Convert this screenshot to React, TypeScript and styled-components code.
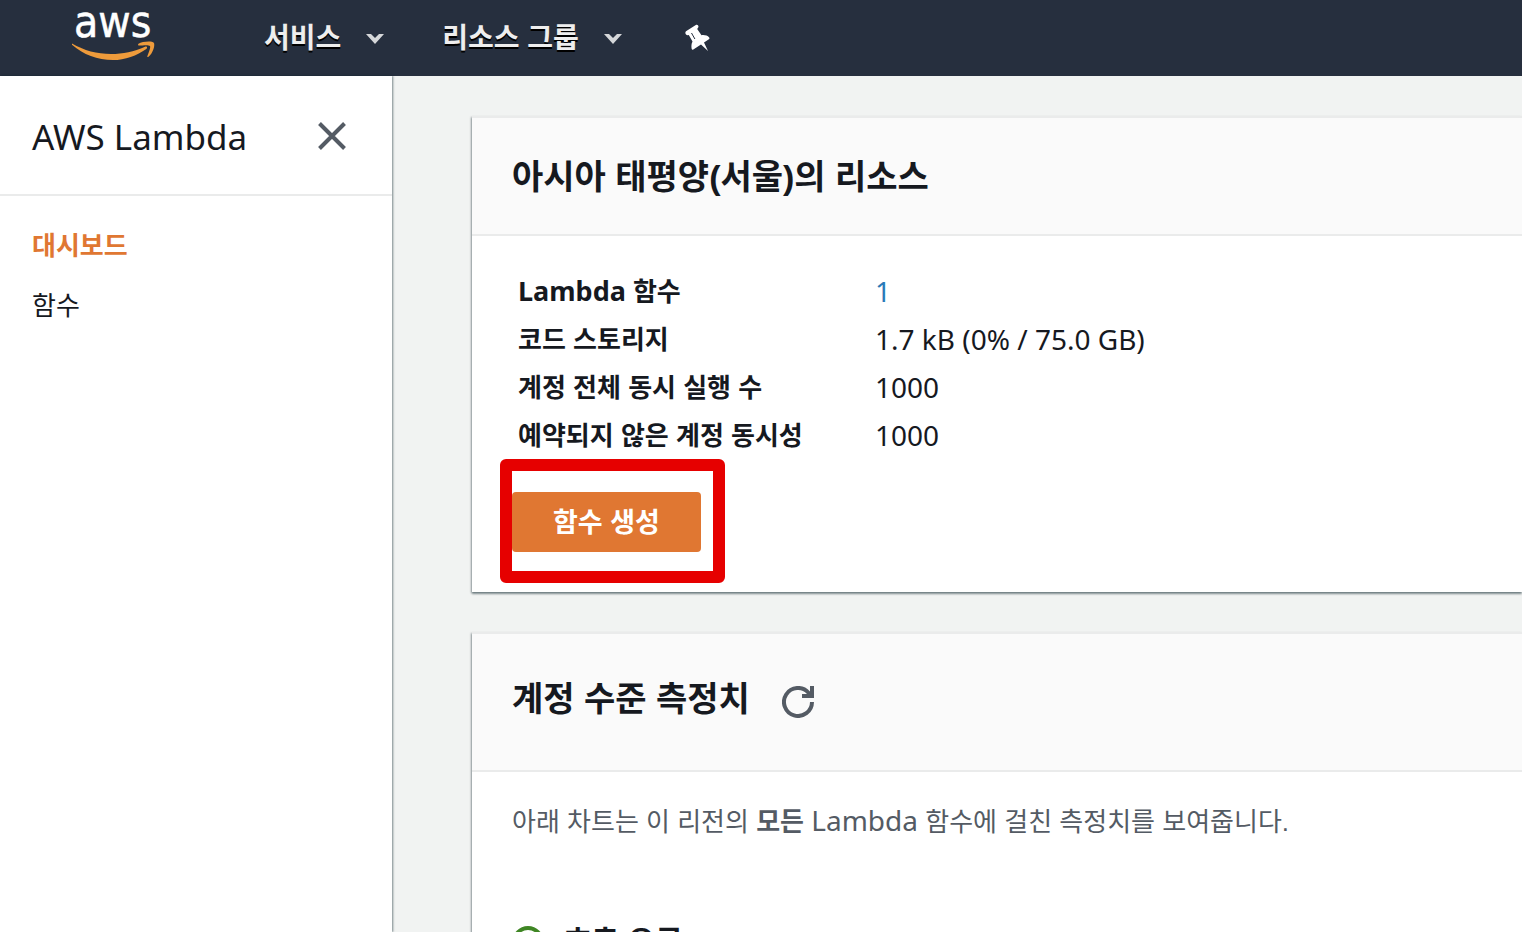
import React from "react";
import styled, { createGlobalStyle } from "styled-components";

const latin = `"Noto Sans", "Noto Sans CJK KR", sans-serif`;
const korean = `"Liberation Sans", "Noto Sans CJK KR", sans-serif`;
const ink = "#16191f";
const slate = "#545b64";
const orange = "#e07732";
const rule = "#eaebeb";

const GlobalStyle = createGlobalStyle`
  *, *::before, *::after { box-sizing: border-box; }
  body { margin: 0; color: ${ink}; background: #f1f3f2; font: 26px/48px ${korean}; }
  h1, h2, h3, p, ul { margin: 0; padding: 0; }
  button { border: 0; background: none; padding: 0; font: inherit; color: inherit; cursor: pointer; }
  a { text-decoration: none; color: inherit; }
  svg { display: block; }
`;

const Shell = styled.div`
  display: flex;
  flex-direction: column;
  height: 100vh;
  overflow: hidden;
`;

const TopBar = styled.header`
  display: flex;
  align-items: center;
  flex: none;
  height: 76px;
  padding-left: 72px;
  background: #262f3e;
  color: #eee;
`;

const Logo = styled.a`
  display: block;
  margin-right: 108px;
`;

const LogoText = styled.text`
  font: 44px "DejaVu Sans Condensed", "DejaVu Sans", sans-serif;
  fill: #fff;
  stroke: #fff;
  stroke-width: 0.5;
`;

const MenuButton = styled.button`
  display: flex;
  align-items: center;
  gap: 25px;
  margin-right: 58px;
  font-size: 28px;
  line-height: 40px;
  font-weight: 700;
  text-shadow: 0 2px 0 #000;
`;

const MenuLabel = styled.span`
  padding-top: 2px;
`;

const PinButton = styled.button`
  margin-left: 5px;
`;

const Body = styled.div`
  display: flex;
  flex: 1;
  min-height: 0;
`;

const Sidebar = styled.aside`
  flex: none;
  width: 392px;
  background: #fff;
  box-shadow: 1px 0 2px rgba(0, 28, 36, 0.5);
`;

const SidebarHeader = styled.div`
  display: flex;
  align-items: center;
  justify-content: space-between;
  height: 120px;
  padding: 2px 46px 0 32px;
  border-bottom: 2px solid ${rule};
`;

const SidebarTitle = styled.h2`
  padding-top: 2px;
  font: 400 35px/48px ${latin};
`;

const NavList = styled.ul`
  display: flex;
  flex-direction: column;
  gap: 12px;
  padding: 26px 32px;
  list-style: none;
`;

const NavLink = styled.a<{ $active?: boolean }>`
  display: block;
  color: ${(p) => (p.$active ? orange : ink)};
  font-weight: ${(p) => (p.$active ? 700 : 400)};
`;

const Main = styled.main`
  display: flex;
  flex: 1;
  flex-direction: column;
  gap: 40px;
  min-width: 0;
  padding: 40px 0 0 80px;
  overflow: hidden;
`;

const Panel = styled.section`
  flex: none;
  background: #fff;
  border-top: 2px solid ${rule};
  box-shadow: 0 2px 2px rgba(0, 28, 36, 0.4), -1px 1px 2px rgba(0, 28, 36, 0.3);
`;

const PanelHeader = styled.div<{ $tall?: boolean }>`
  display: flex;
  align-items: center;
  gap: 32px;
  height: ${(p) => (p.$tall ? 138 : 118)}px;
  padding: 0 40px;
  background: #fafafa;
  border-bottom: 2px solid ${rule};
`;

const PanelTitle = styled.h2<{ $raised?: boolean }>`
  padding: ${(p) => (p.$raised ? "0 0 6px" : "2px 0 0")};
  font-size: 34px;
  line-height: 48px;
  font-weight: 700;
`;

const PanelBody = styled.div<{ $top: number }>`
  padding: ${(p) => p.$top}px 40px 40px;
`;

const Stats = styled.table`
  margin: 0 6px 32px;
  border-collapse: collapse;

  th, td { padding: 0; height: 48px; text-align: left; vertical-align: top; }
  th { width: 357px; font-weight: 700; }
  td { font-family: ${latin}; font-size: 28px; line-height: 46px; }
`;

const Latin = styled.span<{ $size: number }>`
  font-family: ${latin};
  font-size: ${(p) => p.$size}px;
  line-height: 28px;
`;

const CountLink = styled.a`
  color: #2a7ab8;
`;

const CreateArea = styled.div`
  position: relative;
  width: max-content;
`;

const CreateButton = styled.button`
  display: block;
  height: 60px;
  padding: 2px 41px 0;
  border-radius: 4px;
  background: ${orange};
  color: #fff;
  font-size: 27px;
  font-weight: 700;
`;

const Highlight = styled.div`
  position: absolute;
  inset: -33px -24px -31px -12px;
  border: 12px solid #e60000;
  border-radius: 6px;
  pointer-events: none;
`;

const Note = styled.p`
  margin-bottom: 72px;
  color: ${slate};
`;

const MetricTitle = styled.h3`
  display: flex;
  align-items: center;
  gap: 20px;
  font-size: 30px;
  line-height: 48px;
`;

const Caret = () => (
  <svg width="18" height="11" viewBox="0 0 18 11" aria-hidden="true">
    <path d="M0 1h5l4 4 4-4h5L9 11z" fill="#d5d7d9" />
  </svg>
);

const AwsLogo = () => (
  <svg width="84" height="76" viewBox="0 -12 84 76" aria-hidden="true">
    <LogoText x="2" y="25">aws</LogoText>
    <path d="M0 31.500C12 38.500 25 42 39 42c12 0 23-2.400 34-7.300 1.800-.7 3 1 1.300 2.200C65 43.500 53 48 41 48 25.500 48 11 42.500.3 33c-.9-.8-.9-2-.3-1.500z" fill="#ee9b3b" />
    <path d="M66.500 31.700C70 29.400 80 28.600 81.800 30.700c1.600 2.200-.7 10.400-5.300 14.100-.8.6-1.500.2-1.100-.7 1.300-3.200 3.400-8.600 2.600-10-1-1.500-7-.8-10.700-.5-1.200.1-1.600-1.200-.8-1.900z" fill="#ee9b3b" />
  </svg>
);

const PinIcon = () => (
  <svg width="25" height="28" viewBox="0 0 25 28" aria-hidden="true">
    <path d="M1 7.300L11.200.8c1.700-.6 3 1.700 1.800 3L12.200 5l4.300 6.200c3-.4 6 .3 7.700 2.300.5.700.3 1.400-.3 1.800L19 18.500 23 27 16 20.500 8.300 25.600c-.7.4-1.400.2-1.600-.6-.5-2.700-.4-5.400.8-7.500L3.800 11 2.800 11.200C.8 11.300-.5 8.500 1 7.300z" fill="#fff" />
    <path d="M6.500 9l3.400 6" stroke="#262f3e" strokeWidth="1" />
  </svg>
);

const CloseIcon = () => (
  <svg width="28" height="28" viewBox="0 0 28 28" aria-hidden="true">
    <path d="M1.500 1.500l25 25M26.500 1.500l-25 25" stroke={slate} strokeWidth="4" />
  </svg>
);

const RefreshIcon = () => (
  <svg width="32" height="32" viewBox="0 0 32 32" fill="none" stroke={slate} strokeWidth="4" aria-hidden="true">
    <path d="M30 16A14 14 0 1 1 26.500 6.700L30 10.500" />
    <path d="M30 0v10H20" />
  </svg>
);

const CheckIcon = () => (
  <svg width="32" height="32" viewBox="0 0 32 32" fill="none" stroke="#3f8624" strokeWidth="4" aria-hidden="true">
    <circle cx="16" cy="16" r="14" />
    <path d="M9 16l5 5 9-10" />
  </svg>
);

const stats: { label: React.ReactNode; value: React.ReactNode }[] = [
  { label: <><Latin $size={27}>Lambda </Latin>함수</>, value: <CountLink href="#functions">1</CountLink> },
  { label: "코드 스토리지", value: "1.7 kB (0% / 75.0 GB)" },
  { label: "계정 전체 동시 실행 수", value: "1000" },
  { label: "예약되지 않은 계정 동시성", value: "1000" },
];

export default function App() {
  return (
    <Shell lang="ko">
      <GlobalStyle />
      <TopBar>
        <Logo href="#home" aria-label="aws"><AwsLogo /></Logo>
        <MenuButton><MenuLabel>서비스</MenuLabel><Caret /></MenuButton>
        <MenuButton><MenuLabel>리소스 그룹</MenuLabel><Caret /></MenuButton>
        <PinButton aria-label="고정"><PinIcon /></PinButton>
      </TopBar>
      <Body>
        <Sidebar>
          <SidebarHeader>
            <SidebarTitle>AWS Lambda</SidebarTitle>
            <button aria-label="닫기"><CloseIcon /></button>
          </SidebarHeader>
          <NavList>
            <li><NavLink href="#dashboard" $active>대시보드</NavLink></li>
            <li><NavLink href="#functions">함수</NavLink></li>
          </NavList>
        </Sidebar>
        <Main>
          <Panel>
            <PanelHeader>
              <PanelTitle>아시아 태평양(서울)의 리소스</PanelTitle>
            </PanelHeader>
            <PanelBody $top={32}>
              <Stats>
                <tbody>
                  {stats.map((s, i) => (
                    <tr key={i}>
                      <th scope="row">{s.label}</th>
                      <td>{s.value}</td>
                    </tr>
                  ))}
                </tbody>
              </Stats>
              <CreateArea>
                <CreateButton>함수 생성</CreateButton>
                <Highlight />
              </CreateArea>
            </PanelBody>
          </Panel>
          <Panel>
            <PanelHeader $tall>
              <PanelTitle $raised>계정 수준 측정치</PanelTitle>
              <button aria-label="새로 고침"><RefreshIcon /></button>
            </PanelHeader>
            <PanelBody $top={26}>
              <Note>
                아래 차트는 이 리전의 <b>모든</b> <Latin $size={28}>Lambda </Latin>함수에 걸친 측정치를 보여줍니다.
              </Note>
              <MetricTitle><CheckIcon />호출 오류</MetricTitle>
            </PanelBody>
          </Panel>
        </Main>
      </Body>
    </Shell>
  );
}
